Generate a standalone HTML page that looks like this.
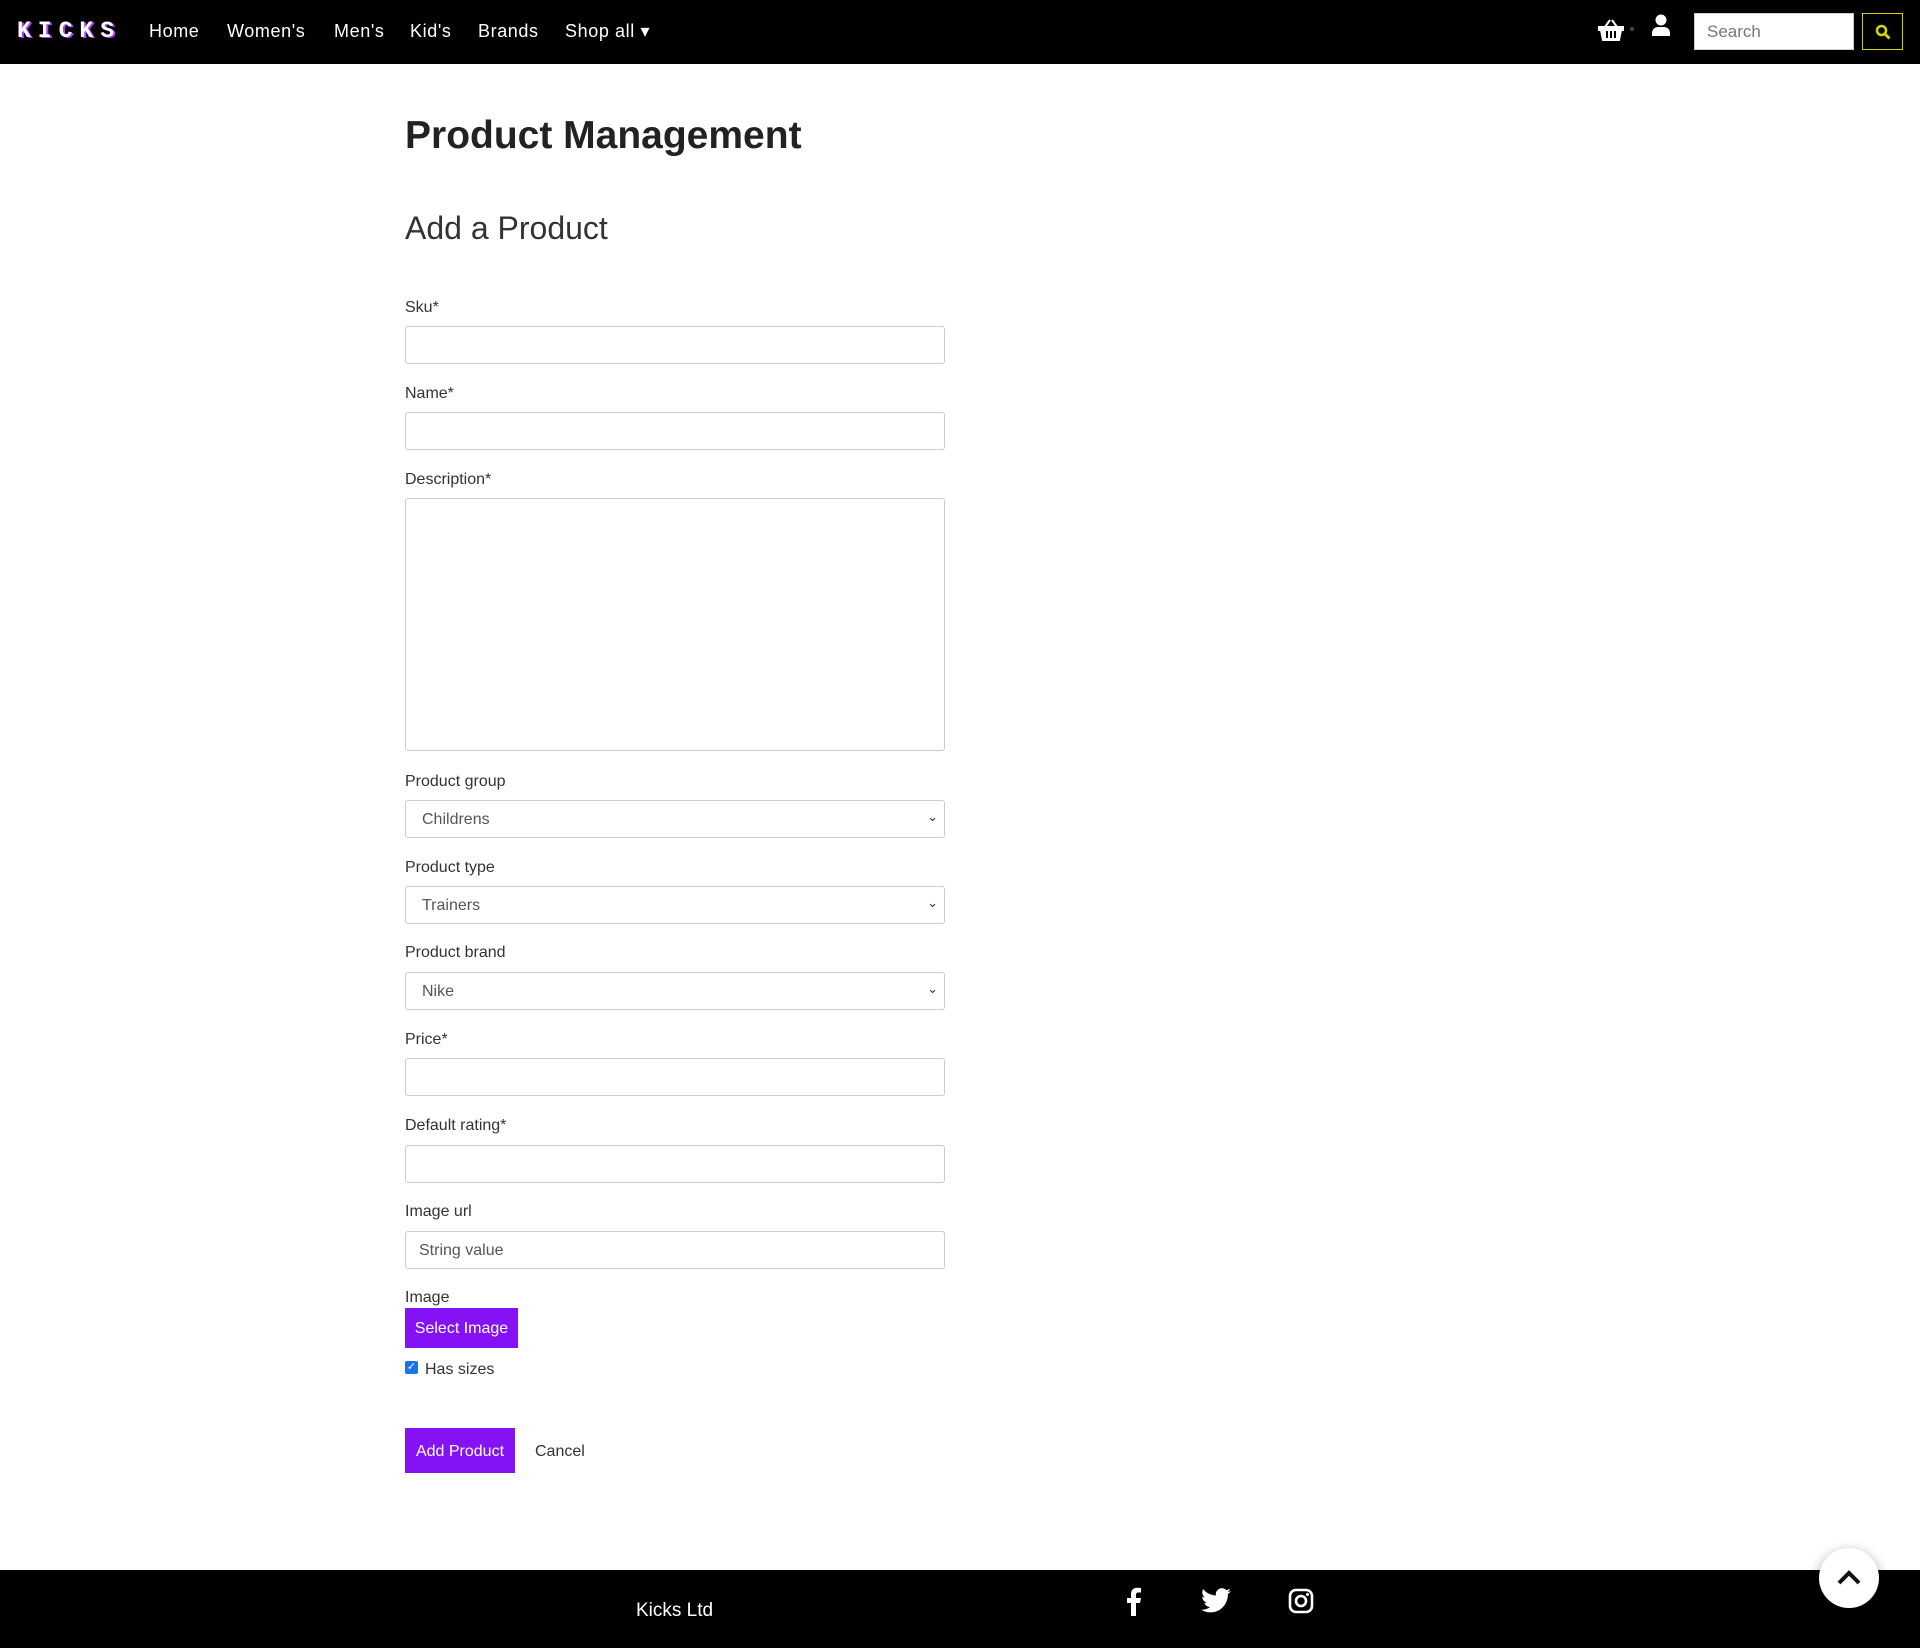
<!DOCTYPE html>
<html><head><meta charset="utf-8"><style>
*{box-sizing:border-box;margin:0;padding:0}
body{width:1920px;height:1648px;position:relative;background:#fff;font-family:"Liberation Sans",sans-serif;color:#222;overflow:hidden}
.nav{position:absolute;left:0;top:0;width:1920px;height:64px;background:#000}
.logo{position:absolute;left:17px;top:18px;color:#fff;font:bold 23px "Liberation Mono",monospace;letter-spacing:7px;text-shadow:2px 1px 0 #b040ff}
.nl{position:absolute;top:21px;color:#fff;font-size:18px;letter-spacing:.6px}
.search{position:absolute;left:1694px;top:13px;width:160px;height:37px;background:#fff;border:1px solid #ccc;color:#777;font-size:17px;padding:8px 12px}
.sbtn{position:absolute;left:1862px;top:13px;width:41px;height:37px;border:1px solid #d4d400}
.lab{position:absolute;left:405px;font-size:16px;color:#333}
.inp{position:absolute;left:405px;width:540px;height:38px;border:1px solid #ccc;border-radius:3px;background:#fff;font-size:16px;color:#555;padding:10px 16px}
.btn{position:absolute;left:405px;background:#8412f5;color:#fff;font-size:16px;text-align:center}
.foot{position:absolute;left:0;top:1570px;width:1920px;height:78px;background:#000}
</style></head><body>
<div class="nav">
<div class="logo">KICKS</div>
<div class="nl" style="left:149px">Home</div>
<div class="nl" style="left:227px">Women's</div>
<div class="nl" style="left:334px">Men's</div>
<div class="nl" style="left:410px">Kid's</div>
<div class="nl" style="left:478px">Brands</div>
<div class="nl" style="left:565px">Shop all ▾</div>
<svg style="position:absolute;left:1598px;top:19px" width="26" height="22" viewBox="0 0 26 22"><path d="M1 8h24v3h-2l-2 10H5L3 11H1z M7 8l5-7 M19 8l-5-7" fill="#fff" stroke="#fff" stroke-width="2"/><path d="M9 12v7M13 12v7M17 12v7" stroke="#000" stroke-width="2"/></svg>
<div style="position:absolute;left:1630px;top:27px;width:4px;height:4px;border-radius:2px;background:#444"></div>
<svg style="position:absolute;left:1651px;top:14px" width="20" height="22" viewBox="0 0 20 22"><circle cx="10" cy="6" r="5.5" fill="#fff"/><path d="M1 22v-3a6 6 0 0 1 6-6h6a6 6 0 0 1 6 6v3z" fill="#fff"/></svg>
<div class="search">Search</div>
<div class="sbtn"><svg style="position:absolute;left:12px;top:10px" width="16" height="16" viewBox="0 0 16 16"><circle cx="6.5" cy="6.5" r="4.5" fill="none" stroke="#d4d400" stroke-width="2.5"/><path d="M10 10l4.5 4.5" stroke="#d4d400" stroke-width="3"/></svg></div>
</div>
<div style="position:absolute;left:405px;top:114px;font-size:39px;font-weight:bold;color:#222">Product Management</div>
<div style="position:absolute;left:405px;top:210px;font-size:32px;color:#333">Add a Product</div>
<div class="lab" style="top:299px">Sku*</div><div class="inp" style="top:326px"></div>
<div class="lab" style="top:385px">Name*</div><div class="inp" style="top:412px"></div>
<div class="lab" style="top:471px">Description*</div><div class="inp" style="top:498px;height:253px"></div>
<div class="lab" style="top:773px">Product group</div><div class="inp" style="top:800px">Childrens<span style="position:absolute;right:6px;top:8px;font-size:13px;color:#333">⌄</span></div>
<div class="lab" style="top:859px">Product type</div><div class="inp" style="top:886px">Trainers<span style="position:absolute;right:6px;top:8px;font-size:13px;color:#333">⌄</span></div>
<div class="lab" style="top:944px">Product brand</div><div class="inp" style="top:972px">Nike<span style="position:absolute;right:6px;top:8px;font-size:13px;color:#333">⌄</span></div>
<div class="lab" style="top:1031px">Price*</div><div class="inp" style="top:1058px"></div>
<div class="lab" style="top:1117px">Default rating*</div><div class="inp" style="top:1145px"></div>
<div class="lab" style="top:1203px">Image url</div><div class="inp" style="top:1231px;padding-left:13px">String value</div>
<div class="lab" style="top:1289px">Image</div>
<div class="btn" style="top:1308px;width:113px;height:40px;line-height:42px">Select Image</div>
<div style="position:absolute;left:405px;top:1361px;width:13px;height:13px;background:#1a73e8;border-radius:2px;color:#fff;font-size:11px;line-height:13px;text-align:center">✓</div>
<div class="lab" style="left:425px;top:1361px">Has sizes</div>
<div class="btn" style="top:1428px;width:110px;height:45px;line-height:47px">Add Product</div>
<div class="lab" style="left:535px;top:1443px">Cancel</div>
<div class="foot">
<div style="position:absolute;left:636px;top:30px;color:#fff;font-size:19px">Kicks Ltd</div>
<svg style="position:absolute;left:1126px;top:16px" width="16" height="30" viewBox="0 0 16 30"><path d="M10 30V17h4l1-5h-5V9c0-1.5.5-2.5 2.5-2.5H15V2c-1-.2-2.5-.3-4-.3C7.5 1.7 5 4 5 8v4H1v5h4v13z" fill="#fff"/></svg>
<svg style="position:absolute;left:1201px;top:18px" width="30" height="25" viewBox="0 0 24 20"><path d="M24 2.4c-.9.4-1.8.7-2.8.8 1-.6 1.8-1.6 2.2-2.7-1 .6-2 1-3.1 1.2A4.9 4.9 0 0 0 11.9 6 14 14 0 0 1 1.7.9a4.9 4.9 0 0 0 1.5 6.6c-.8 0-1.600-.3-2.2-.6 0 2.4 1.7 4.4 3.9 4.8-.7.2-1.5.2-2.2.1.6 2 2.4 3.4 4.6 3.4A9.9 9.9 0 0 1 0 17.3 14 14 0 0 0 7.5 19.5c9 0 14-7.5 14-14v-.6c1-.7 1.8-1.6 2.5-2.5z" fill="#fff"/></svg>
<svg style="position:absolute;left:1288px;top:18px" width="26" height="26" viewBox="0 0 26 26"><rect x="2" y="2" width="22" height="22" rx="6" fill="none" stroke="#fff" stroke-width="2.6"/><circle cx="13" cy="13" r="5" fill="none" stroke="#fff" stroke-width="2.6"/><circle cx="19.5" cy="6.5" r="1.5" fill="#fff"/></svg>
</div>
<div style="position:absolute;left:1819px;top:1548px;width:60px;height:60px;border-radius:30px;background:#fff;box-shadow:0 4px 12px rgba(0,0,0,.4)"><svg style="position:absolute;left:17px;top:20px" width="26" height="18" viewBox="0 0 26 18"><path d="M3 15L13 5l10 10" fill="none" stroke="#111" stroke-width="4"/></svg></div>
</body></html>
